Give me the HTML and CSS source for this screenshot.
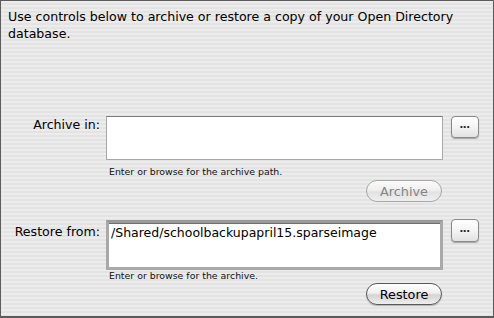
FILE: index.html
```html
<!DOCTYPE html>
<html lang="en">
  <head>
    <meta charset="UTF-8" />
    <title>Archive and Restore</title>
    <link rel="stylesheet" href="styles.css">
  </head>
  <body>
    <div class="panel">
      <p class="intro">
        Use controls below to archive or restore a copy of your Open Directory
        database.
      </p>

      <div class="group group-archive">
        <label class="field-label" for="archivePath">Archive in:</label>
        <div class="field-col">
          <div class="field" id="archivePath"></div>
          <div class="hint">Enter or browse for the archive path.</div>
          <div class="actions">
            <button type="button" class="pill" disabled>Archive</button>
          </div>
        </div>
        <button type="button" class="browse">&bull;&bull;&bull;</button>
      </div>

      <div class="group group-restore">
        <label class="field-label" for="restorePath">Restore from:</label>
        <div class="field-col">
          <div class="field field-active" id="restorePath">/Shared/schoolbackupapril15.sparseimage</div>
          <div class="hint">Enter or browse for the archive.</div>
          <div class="actions">
            <button type="button" class="pill">Restore</button>
          </div>
        </div>
        <button type="button" class="browse">&bull;&bull;&bull;</button>
      </div>
    </div>
  </body>
</html>
```

FILE: styles.css
```css
body {
  margin: 0;
  font-family: "DejaVu Sans", "Liberation Sans", sans-serif;
  color: #000;
}

.panel {
  width: 494px;
  height: 318px;
  box-sizing: border-box;
  border: 1px solid #5c5c5c;
  border-bottom-width: 2px;
  background-color: #e8e8e8;
  background-image: repeating-linear-gradient(
    to bottom,
    #ececec 0,
    #ececec 2px,
    #e3e3e3 2px,
    #e3e3e3 4px
  );
  overflow: hidden;
}

.intro {
  margin: 0;
  padding: 7px 20px 0 7px;
  font-size: 12.6px;
  line-height: 17px;
}

.group {
  display: grid;
  grid-template-columns: 99px 337px 28px;
  column-gap: 6px;
}

.group-archive {
  margin-top: 74px;
}

.group-restore {
  margin-top: 18px;
}

.field-label {
  font-size: 12.6px;
  line-height: 16px;
  text-align: right;
  padding-top: 1px;
  white-space: nowrap;
}

.group-restore .field-label {
  padding-top: 4px;
}

.field-col {
  display: flex;
  flex-direction: column;
}

.field {
  height: 44px;
  box-sizing: border-box;
  background: #fff;
  border: 1px solid #a8a8a8;
  border-top-color: #7a7a7a;
  font-size: 12.5px;
  line-height: 16px;
  padding: 3px 4px;
}

.field-active {
  height: 50px;
  border: 3px solid #a9a9a9;
  border-top-color: #9a9a9a;
  box-shadow: inset 0 1px 0 #6e6e6e;
  padding: 2px 2px;
}

.hint {
  font-size: 9.4px;
  line-height: 12px;
  padding: 6px 0 0 3px;
  color: #111;
}

.group-restore .hint {
  padding-top: 0;
}

.actions {
  display: flex;
  justify-content: flex-end;
  padding: 2px 1px 0 0;
}

.group-restore .actions {
  padding-top: 1px;
}

.pill {
  width: 76px;
  height: 22px;
  border-radius: 11px;
  border: 1px solid #5a5a5a;
  background: linear-gradient(to bottom, #ffffff 0%, #f0f0f0 45%, #d4d4d4 55%, #eeeeee 100%);
  font-family: "DejaVu Sans", "Liberation Sans", sans-serif;
  font-size: 12.8px;
  color: #000;
  padding: 0;
  box-shadow: 0 1px 1px rgba(0, 0, 0, 0.25);
}

.pill:disabled {
  border-color: #a8a8a8;
  color: #858585;
  background: linear-gradient(to bottom, #fafafa 0%, #f0f0f0 45%, #e2e2e2 55%, #efefef 100%);
  box-shadow: none;
}

.browse {
  width: 28px;
  height: 22px;
  margin-left: 2px;
  padding: 0;
  border: 1px solid #8a8a8a;
  border-radius: 4px;
  background: linear-gradient(to bottom, #ffffff 0%, #f4f4f4 50%, #e2e2e2 100%);
  box-shadow: 0 1px 1px rgba(0, 0, 0, 0.3);
  font-size: 8px;
  letter-spacing: 0.5px;
  color: #222;
  line-height: 20px;
}

.group-restore .browse {
  margin-top: -1px;
  height: 23px;
}
```
